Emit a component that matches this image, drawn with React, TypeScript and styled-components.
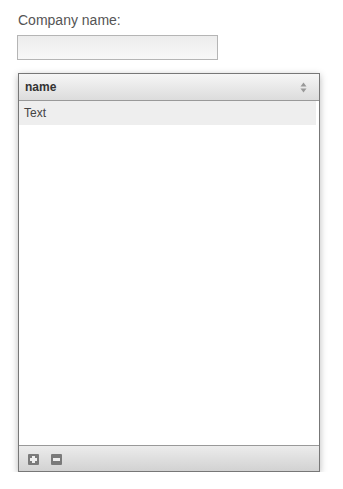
import React from "react";
import styled, { createGlobalStyle } from "styled-components";

const Global = createGlobalStyle`
  html, body { margin: 0; padding: 0; background: #fff; }
  body { font-family: "Liberation Sans", Arial, sans-serif; }
`;

const Page = styled.div`
  padding: 12px 0 0 17px;
  display: flex;
  flex-direction: column;
  align-items: flex-start;
`;

const Label = styled.label`
  font-size: 14px;
  line-height: 17px;
  color: #555;
  padding-left: 1px;
`;

const Input = styled.div`
  margin-top: 6px;
  width: 199px;
  height: 23px;
  border: 1px solid #b5b5b5;
  background: linear-gradient(#ececec, #f8f8f8);
`;

const Panel = styled.div`
  margin-top: 13px;
  margin-left: 1px;
  width: 300px;
  height: 397px;
  border: 1px solid #777;
  box-shadow: 0 2px 7px rgba(0, 0, 0, 0.28);
  display: flex;
  flex-direction: column;
  background: #fff;
`;

const Header = styled.div`
  height: 26px;
  border-bottom: 1px solid #999;
  background: linear-gradient(#f6f6f6, #dcdcdc);
  display: flex;
  align-items: center;
  justify-content: space-between;
  padding: 0 12px 0 6px;
  font-size: 12px;
  font-weight: bold;
  color: #333;
`;

const Body = styled.div`
  flex: 1;
  display: flex;
  flex-direction: column;
  padding-right: 3px;
`;

const Row = styled.div`
  height: 24px;
  background: #eeeeee;
  display: flex;
  align-items: center;
  padding-left: 5px;
  font-size: 12px;
  color: #444;
`;

const Footer = styled.div`
  height: 25px;
  border-top: 1px solid #999;
  background: linear-gradient(#ececec, #d2d2d2);
  display: flex;
  align-items: center;
  gap: 12px;
  padding-left: 9px;
`;

const IconBtn = styled.span`
  width: 11px;
  height: 11px;
  display: inline-flex;
  margin-top: 1px;
`;

const SortIcon = () => (
  <svg width="7" height="11" viewBox="0 0 7 11">
    <path d="M3.5 0.5 L6.5 4.5 H0.5 Z" fill="#999" />
    <path d="M3.5 10.5 L6.5 6.5 H0.5 Z" fill="#999" />
  </svg>
);

const Plus = () => (
  <svg width="11" height="11" viewBox="0 0 11 11">
    <rect x="0" y="0" width="11" height="11" rx="1" fill="#7a7a7a" />
    <rect x="4" y="2" width="3" height="7" fill="#eee" />
    <rect x="2" y="4" width="7" height="3" fill="#eee" />
  </svg>
);

const Minus = () => (
  <svg width="11" height="11" viewBox="0 0 11 11">
    <rect x="0" y="0" width="11" height="11" rx="1" fill="#7a7a7a" />
    <rect x="2" y="4" width="7" height="3" fill="#eee" />
  </svg>
);

export default function App() {
  return (
    <>
      <Global />
      <Page>
        <Label>Company name:</Label>
        <Input />
        <Panel>
          <Header>
            <span>name</span>
            <SortIcon />
          </Header>
          <Body>
            <Row>Text</Row>
          </Body>
          <Footer>
            <IconBtn><Plus /></IconBtn>
            <IconBtn><Minus /></IconBtn>
          </Footer>
        </Panel>
      </Page>
    </>
  );
}
